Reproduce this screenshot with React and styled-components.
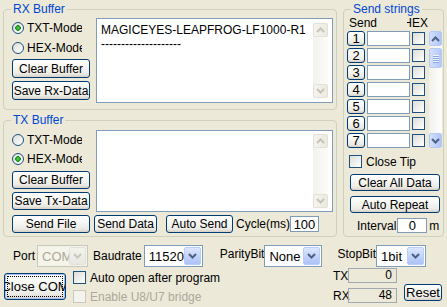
import React from "react";
import styled, { createGlobalStyle } from "styled-components";

const GlobalStyle = createGlobalStyle`
  * { box-sizing: border-box; }
  body {
    margin: 0;
    background: #ece9d8;
    font-family: "Liberation Sans", Arial, sans-serif;
    font-size: 12px;
    color: #000;
  }
`;

const Chevron = ({ up, color = "#4d6185", size = 9 }) => (
  <svg width={size} height={size - 3} viewBox="0 0 9 6">
    <polyline
      points={up ? "1,5 4.5,1.5 8,5" : "1,1 4.5,4.5 8,1"}
      fill="none"
      stroke={color}
      strokeWidth="2"
    />
  </svg>
);

const SEND_ROWS = [1, 2, 3, 4, 5, 6, 7];

export default function App() {
  return (
    <>
      <GlobalStyle />
      <Window>
        <Top>
          <LeftCol>
            <Group $h={108} $pl={8} $pr={3}>
              <Legend $indent={-1}>RX Buffer</Legend>
              <BufferRow>
                <Controls $mt={2}>
                  <Radio $h={20}>
                    <RadioDot $checked />
                    <RadioText>TXT-Mode</RadioText>
                  </Radio>
                  <Radio $h={20}>
                    <RadioDot />
                    <RadioText>HEX-Mode</RadioText>
                  </Radio>
                  <Btn $w={78} $h={19} $mt={1}>Clear Buffer</Btn>
                  <Btn $w={78} $h={19} $mt={3}>Save Rx-Data</Btn>
                </Controls>
                <TextBox $h={85} $mt={2}>
                  <TextContent>
                    MAGICEYES-LEAPFROG-LF1000-R1
                    <br />
                    --------------------
                  </TextContent>
                  <DimBar $m={4}>
                    <DimBtn><Chevron up color="#c7c4b4" /></DimBtn>
                    <DimBtn><Chevron color="#c7c4b4" /></DimBtn>
                  </DimBar>
                </TextBox>
              </BufferRow>
            </Group>

            <Group $h={124} $pl={8} $pr={3}>
              <Legend $indent={-1}>TX Buffer</Legend>
              <BufferRow>
                <Controls $mt={3}>
                  <Radio $h={19}>
                    <RadioDot />
                    <RadioText>TXT-Mode</RadioText>
                  </Radio>
                  <Radio $h={19}>
                    <RadioDot $checked />
                    <RadioText>HEX-Mode</RadioText>
                  </Radio>
                  <Btn $w={78} $h={18} $mt={3}>Clear Buffer</Btn>
                  <Btn $w={78} $h={18} $mt={3}>Save Tx-Data</Btn>
                </Controls>
                <TextBox $h={82} $mt={3}>
                  <TextContent />
                  <DimBar $m={3}>
                    <DimBtn><Chevron up color="#c7c4b4" /></DimBtn>
                    <DimBtn><Chevron color="#c7c4b4" /></DimBtn>
                  </DimBar>
                </TextBox>
              </BufferRow>
              <SendRow>
                <Btn $w={78} $h={18}>Send File</Btn>
                <Btn $w={63} $h={18} $ml={4}>Send Data</Btn>
                <Btn $w={67} $h={18} $ml={9}>Auto Send</Btn>
                <Caption $ml={3}>Cycle(ms)</Caption>
                <Edit $w={29} $h={16} $align="center">100</Edit>
              </SendRow>
            </Group>
          </LeftCol>

          <Group $h={235} $w={101} $pl={3} $pr={1}>
            <Legend $indent={4}>Send strings</Legend>
            <HeaderRow>
              <span>Send</span>
              <HexHead>HEX</HexHead>
            </HeaderRow>
            <ListArea>
              <SendList>
                {SEND_ROWS.map((n) => (
                  <SendItem key={n}>
                    <NumBtn>{n}</NumBtn>
                    <Edit $w={43} $h={15} $ml={2} />
                    <Check $ml={2} />
                  </SendItem>
                ))}
              </SendList>
              <ScrollBar>
                <ScrollBtn><Chevron up /></ScrollBtn>
                <Thumb>
                  <Grip /><Grip /><Grip /><Grip />
                </Thumb>
                <Filler />
                <ScrollBtn><Chevron /></ScrollBtn>
              </ScrollBar>
            </ListArea>
            <CheckRow $mt={7} $ml={2}>
              <Check />
              <span>Close Tip</span>
            </CheckRow>
            <Btn $w={90} $h={17} $mt={6} $ml={3}>Clear All Data</Btn>
            <Btn $w={90} $h={17} $mt={5} $ml={3}>Auto Repeat</Btn>
            <IntervalRow>
              <span>Interval</span>
              <Edit $w={30} $h={15} $ml={1} $align="center">0</Edit>
              <Caption $ml={2}>m</Caption>
            </IntervalRow>
          </Group>
        </Top>

        <Bottom>
          <PortRow>
            <Caption>Port</Caption>
            <Combo $w={51} $ml={2} $disabled>
              <ComboText $disabled>COM1</ComboText>
              <DropBtn $disabled><Chevron color="#c9c7ba" /></DropBtn>
            </Combo>
            <Caption $ml={5}>Baudrate</Caption>
            <Combo $w={59} $ml={2}>
              <ComboText>115200</ComboText>
              <DropBtn><Chevron /></DropBtn>
            </Combo>
            <Caption $ml={17} $raise>ParityBit</Caption>
            <Combo $w={58}>
              <ComboText>None</ComboText>
              <DropBtn><Chevron /></DropBtn>
            </Combo>
            <Caption $ml={15} $raise>StopBit</Caption>
            <Combo $w={50}>
              <ComboText>1bit</ComboText>
              <DropBtn><Chevron /></DropBtn>
            </Combo>
          </PortRow>

          <ActionRow>
            <DefaultBtn>
              <FocusRing>
                <span>Close COM</span>
              </FocusRing>
            </DefaultBtn>
            <Checks>
              <CheckRow>
                <Check />
                <span>Auto open after program</span>
              </CheckRow>
              <CheckRow $mt={6} $disabled>
                <Check $disabled />
                <span>Enable U8/U7 bridge</span>
              </CheckRow>
            </Checks>
            <Counters>
              <CounterRow>
                <CounterLabel>TX</CounterLabel>
                <CounterBox>0</CounterBox>
              </CounterRow>
              <CounterRow>
                <CounterLabel>RX</CounterLabel>
                <CounterBox>48</CounterBox>
              </CounterRow>
            </Counters>
            <Btn $w={38} $h={17} $mt={16} $ml={7} $fs={13}>Reset</Btn>
          </ActionRow>
        </Bottom>
      </Window>
    </>
  );
}

const Window = styled.div`
  width: 447px;
  height: 307px;
  background: #ece9d8;
  overflow: hidden;
  display: flex;
  flex-direction: column;
`;

const Top = styled.div`
  display: flex;
  gap: 6px;
  padding: 2px 3px 0 3px;
`;

const LeftCol = styled.div`
  width: 334px;
  display: flex;
  flex-direction: column;
  gap: 3px;
`;

const Group = styled.fieldset`
  margin: 0;
  padding: 0 ${({ $pr }) => $pr}px 0 ${({ $pl }) => $pl}px;
  width: ${({ $w }) => ($w ? `${$w}px` : "auto")};
  height: ${({ $h }) => $h}px;
  min-width: 0;
  border: 1px solid #d0d0bf;
  border-radius: 4px;
  display: flex;
  flex-direction: column;
`;

const Legend = styled.legend`
  margin-left: ${({ $indent }) => $indent}px;
  padding: 0 2px;
  line-height: 14px;
  font-size: 12px;
  color: #0046d5;
`;

const BufferRow = styled.div`
  display: flex;
  gap: 6px;
`;

const Controls = styled.div`
  width: 78px;
  margin-top: ${({ $mt }) => $mt}px;
  display: flex;
  flex-direction: column;
`;

const Radio = styled.div`
  height: ${({ $h }) => $h}px;
  display: flex;
  align-items: center;
  gap: 3px;
`;

const RadioDot = styled.span`
  width: 12px;
  height: 12px;
  border-radius: 50%;
  border: 1px solid #1c5180;
  background: ${({ $checked }) =>
    $checked
      ? "radial-gradient(circle at 50% 50%, #5fd35f 0, #21a121 2px, #1a8a1a 2.6px, transparent 3px), linear-gradient(135deg, #dcdcd7, #fff)"
      : "linear-gradient(135deg, #dcdcd7, #fff)"};
  flex-shrink: 0;
`;

const RadioText = styled.span`
  width: 55px;
  overflow: hidden;
  white-space: nowrap;
`;

const Btn = styled.button`
  width: ${({ $w }) => $w}px;
  height: ${({ $h }) => $h}px;
  margin: ${({ $mt = 0 }) => $mt}px 0 0 ${({ $ml = 0 }) => $ml}px;
  padding: 0;
  border: 1px solid #003c74;
  border-radius: 3px;
  background: linear-gradient(180deg, #ffffff 0%, #f5f5f1 45%, #ecebe6 80%, #d6d0c5 100%);
  font-family: "Liberation Sans", Arial, sans-serif;
  font-size: ${({ $fs = 12 }) => $fs}px;
  color: #000;
  display: flex;
  align-items: center;
  justify-content: center;
  white-space: nowrap;
  overflow: hidden;
  flex-shrink: 0;
`;

const NumBtn = styled(Btn)`
  width: 18px;
  height: 15px;
  font-size: 13px;
`;

const TextBox = styled.div`
  flex: 1;
  height: ${({ $h }) => $h}px;
  margin-top: ${({ $mt }) => $mt}px;
  border: 1px solid #7f9db9;
  background: #fff;
  display: flex;
`;

const TextContent = styled.div`
  flex: 1;
  padding: 4px 0 0 4px;
  line-height: 14px;
  white-space: nowrap;
  overflow: hidden;
`;

const DimBar = styled.div`
  width: 15px;
  margin: ${({ $m }) => $m}px 4px ${({ $m }) => $m}px 0;
  display: flex;
  flex-direction: column;
  justify-content: space-between;
  background: linear-gradient(90deg, #f3f2ec, #fbfbf9);
`;

const DimBtn = styled.div`
  height: 14px;
  border: 1px solid #e4e2d8;
  border-radius: 2px;
  background: linear-gradient(90deg, #f4f3ee, #eceae2);
  display: flex;
  align-items: center;
  justify-content: center;
`;

const SendRow = styled.div`
  margin-top: 3px;
  display: flex;
  align-items: center;
`;

const Caption = styled.span`
  margin-left: ${({ $ml = 0 }) => $ml}px;
  margin-bottom: ${({ $raise }) => ($raise ? 4 : 0)}px;
  white-space: nowrap;
  color: ${({ $disabled }) => ($disabled ? "#aca899" : "#000")};
`;

const Edit = styled.div`
  width: ${({ $w }) => $w}px;
  height: ${({ $h }) => $h}px;
  margin-left: ${({ $ml = 0 }) => $ml}px;
  border: 1px solid #7f9db9;
  background: #fff;
  text-align: ${({ $align = "left" }) => $align};
  line-height: ${({ $h }) => $h - 1}px;
  font-size: 13px;
  flex-shrink: 0;
`;

const HeaderRow = styled.div`
  height: 14px;
  line-height: 14px;
  padding-left: 2px;
  display: flex;
`;

const HexHead = styled.span`
  width: 21px;
  margin-left: 30px;
  display: flex;
  justify-content: flex-end;
  overflow: hidden;
`;

const ListArea = styled.div`
  margin-top: 1px;
  display: flex;
  gap: 4px;
`;

const SendList = styled.div`
  display: flex;
  flex-direction: column;
  gap: 2px;
`;

const SendItem = styled.div`
  height: 15px;
  display: flex;
  align-items: center;
`;

const Check = styled.span`
  width: 13px;
  height: 13px;
  margin-left: ${({ $ml = 0 }) => $ml}px;
  border: 1px solid ${({ $disabled }) => ($disabled ? "#cac8bb" : "#1c5180")};
  background: ${({ $disabled }) =>
    $disabled ? "#f4f3ee" : "linear-gradient(135deg, #dcdcd7, #ffffff)"};
  flex-shrink: 0;
`;

const ScrollBar = styled.div`
  width: 13px;
  height: 117px;
  display: flex;
  flex-direction: column;
  background: linear-gradient(90deg, #f3f1ec, #fefefe);
`;

const ScrollBtn = styled.div`
  height: 15px;
  border: 1px solid #b4c8f6;
  border-radius: 2px;
  background: linear-gradient(90deg, #d3dffc, #bfcff9 60%, #b2c5f5);
  display: flex;
  align-items: center;
  justify-content: center;
`;

const Thumb = styled.div`
  height: 20px;
  margin-top: 2px;
  border: 1px solid #b4c8f6;
  border-radius: 2px;
  background: linear-gradient(90deg, #d3dffc, #c1d1fa 60%, #b4c7f6);
  display: flex;
  flex-direction: column;
  align-items: center;
  justify-content: center;
  gap: 1px;
`;

const Grip = styled.span`
  width: 6px;
  height: 1px;
  background: #eef3fe;
  box-shadow: 0 1px 0 #8ca6e0;
`;

const Filler = styled.div`
  flex: 1;
`;

const CheckRow = styled.div`
  margin: ${({ $mt = 0 }) => $mt}px 0 0 ${({ $ml = 0 }) => $ml}px;
  height: 13px;
  display: flex;
  align-items: center;
  gap: 4px;
  white-space: nowrap;
  color: ${({ $disabled }) => ($disabled ? "#aca899" : "#000")};
`;

const IntervalRow = styled.div`
  margin: 5px 0 0 10px;
  display: flex;
  align-items: center;
`;

const Bottom = styled.div`
  flex: 1;
  display: flex;
  flex-direction: column;
  padding: 0 5px 0 4px;
`;

const PortRow = styled.div`
  height: 22px;
  margin-top: 8px;
  padding-left: 9px;
  display: flex;
  align-items: center;
`;

const Combo = styled.div`
  width: ${({ $w }) => $w}px;
  height: 22px;
  margin-left: ${({ $ml = 0 }) => $ml}px;
  padding: 1px;
  border: 1px solid ${({ $disabled }) => ($disabled ? "#c9c7ba" : "#7f9db9")};
  background: ${({ $disabled }) => ($disabled ? "#f5f4ea" : "#fff")};
  display: flex;
  flex-shrink: 0;
`;

const ComboText = styled.div`
  flex: 1;
  min-width: 0;
  padding-left: 3px;
  line-height: 19px;
  font-size: 13px;
  overflow: hidden;
  white-space: nowrap;
  color: ${({ $disabled }) => ($disabled ? "#aca899" : "#000")};
`;

const DropBtn = styled.div`
  width: 17px;
  flex-shrink: 0;
  border: 1px solid ${({ $disabled }) => ($disabled ? "#e2e1d9" : "#b9cdf9")};
  border-radius: 2px;
  background: ${({ $disabled }) =>
    $disabled
      ? "linear-gradient(180deg, #f3f3ee, #e8e7e0)"
      : "linear-gradient(180deg, #dce6fd, #c1d2fa 55%, #adc3f6)"};
  display: flex;
  align-items: center;
  justify-content: center;
`;

const ActionRow = styled.div`
  margin-top: 1px;
  display: flex;
  align-items: flex-start;
`;

const DefaultBtn = styled.button`
  width: 62px;
  height: 27px;
  margin-top: 5px;
  padding: 2px;
  border: 1px solid #003c74;
  border-radius: 3px;
  background: linear-gradient(180deg, #ffffff 0%, #f5f5f1 45%, #ecebe6 80%, #d6d0c5 100%);
  box-shadow: inset 0 0 0 1px #a9c0ee;
  font-family: "Liberation Sans", Arial, sans-serif;
  font-size: 13px;
  color: #000;
  display: flex;
  overflow: hidden;
  flex-shrink: 0;
`;

const FocusRing = styled.div`
  flex: 1;
  min-width: 0;
  border: 1px dotted #000;
  display: flex;
  align-items: center;
  justify-content: center;
  white-space: nowrap;
`;

const Checks = styled.div`
  margin: 3px 0 0 7px;
  display: flex;
  flex-direction: column;
`;

const Counters = styled.div`
  margin-left: auto;
  display: flex;
  flex-direction: column;
  gap: 5px;
`;

const CounterRow = styled.div`
  height: 15px;
  display: flex;
  align-items: center;
`;

const CounterLabel = styled.span`
  width: 15px;
  text-align: right;
  font-size: 12px;
`;

const CounterBox = styled.div`
  width: 49px;
  height: 15px;
  border: 1px solid #a3a9b1;
  padding-right: 4px;
  text-align: right;
  line-height: 13px;
  font-size: 12px;
`;
